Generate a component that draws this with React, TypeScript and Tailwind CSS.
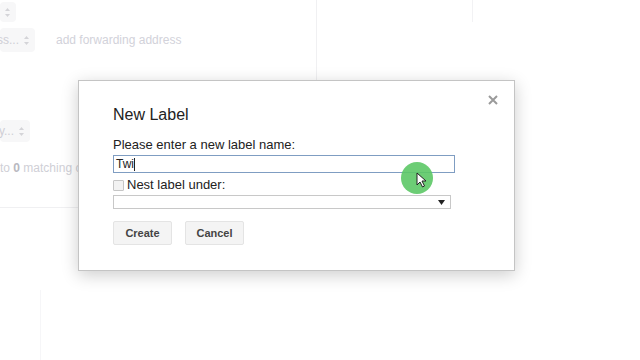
import { useState } from 'react';

const UpDown = () => (
  <svg width="7" height="11" viewBox="0 0 7 11" className="ml-1 shrink-0">
    <path d="M3.5 1 L6 4 H1 Z" fill="#d4d4d8" />
    <path d="M3.5 10 L6 7 H1 Z" fill="#d4d4d8" />
  </svg>
);

const FadedSelect = ({ text, className }: { text: string; className: string }) => (
  <div className={`flex items-center justify-end rounded-sm bg-[#f7f7f8] pr-[5px] text-[12px] text-[#cfcfd6] ${className}`}>
    {text}
    <UpDown />
  </div>
);

const Cursor = () => (
  <svg width="11" height="16" viewBox="0 0 11 16" className="absolute left-[15px] top-[10px]">
    <path d="M1 1 L1 13 L4 10 L6.5 15 L8.5 14 L6 9 L10 9 Z" fill="#fff" stroke="#222" strokeWidth="1" strokeLinejoin="round" />
  </svg>
);

export default function App() {
  const [nest, setNest] = useState(false);

  return (
    <div className="relative h-[360px] w-[640px] overflow-hidden bg-white font-['Liberation_Sans',Arial,sans-serif]">
      {/* faded settings page behind the dialog */}
      <div className="flex">
        <div className="h-[208px] w-[317px] border-b border-r border-[#f0f0f2]">
          <FadedSelect text="" className="mt-[2px] h-[20px] w-[16px]" />
          <div className="mt-[6px] flex items-center">
            <FadedSelect text="ss..." className="h-[24px] w-[35px]" />
            <span className="ml-[21px] text-[12px] text-[#d2d2da]">add forwarding address</span>
          </div>
          <FadedSelect text="ry..." className="mt-[68px] h-[22px] w-[30px]" />
          <div className="mt-[17px] whitespace-nowrap text-[12px] text-[#cfcfd6]">
            to <b className="text-[#b8b8c0]">0</b> matching conversations
          </div>
        </div>
        <div className="ml-[155px] h-[22px] border-l border-[#f2f2f4]" />
      </div>
      <div className="ml-[40px] mt-[82px] h-[70px] border-l border-[#f6f6f8]" />

      {/* New Label dialog */}
      <div className="absolute left-[78px] top-[80px] h-[191px] w-[437px] border border-[#c4c4c4] bg-white pl-[34px] pt-[24px] shadow-[0_4px_16px_rgba(0,0,0,0.2)]">
        <button className="absolute right-[15px] top-[13px] flex h-[12px] w-[12px] items-center justify-center">
          <svg width="10" height="10" viewBox="0 0 10 10">
            <path d="M1 1 L9 9 M9 1 L1 9" stroke="#9a9a9a" strokeWidth="2" />
          </svg>
        </button>
        <div className="h-[20px] text-[16px] leading-[20px] text-[#222]">New Label</div>
        <div className="mt-[12px] h-[16px] text-[13px] leading-[16px] text-[#222]">Please enter a new label name:</div>
        <div className="mt-[2px] flex h-[18px] w-[342px] items-center border border-[#7f9dc2] px-[2px] text-[12px] text-[#222]">
          Twi
          <span className="h-[13px] w-px bg-[#222]" />
        </div>
        <label className="mt-[5px] flex h-[14px] items-center text-[13px] text-[#222]">
          <input
            type="checkbox"
            checked={nest}
            onChange={(e) => setNest(e.target.checked)}
            className="h-[11px] w-[11px] appearance-none rounded-[1px] border border-[#c6c6c6] bg-[#f2f2f2]"
          />
          <span className="ml-[3px]">Nest label under:</span>
        </label>
        <div className="mt-[3px] flex h-[14px] w-[338px] items-center justify-end border border-[#c8c8c8] bg-white pr-[5px]">
          <svg width="7" height="5" viewBox="0 0 7 5">
            <path d="M0 0 H7 L3.5 5 Z" fill="#222" />
          </svg>
        </div>
        <div className="mt-[12px] flex gap-[13px]">
          <button className="h-[24px] w-[59px] rounded-[2px] border border-[#e4e4e4] bg-[#f4f4f4] text-[11px] font-bold text-[#444]">
            Create
          </button>
          <button className="h-[24px] w-[59px] rounded-[2px] border border-[#e4e4e4] bg-[#f4f4f4] text-[11px] font-bold text-[#444]">
            Cancel
          </button>
        </div>
      </div>

      {/* click highlight */}
      <div className="absolute left-[401px] top-[162px] h-[32px] w-[32px] rounded-full bg-[#5cc866]/90">
        <Cursor />
      </div>
    </div>
  );
}
